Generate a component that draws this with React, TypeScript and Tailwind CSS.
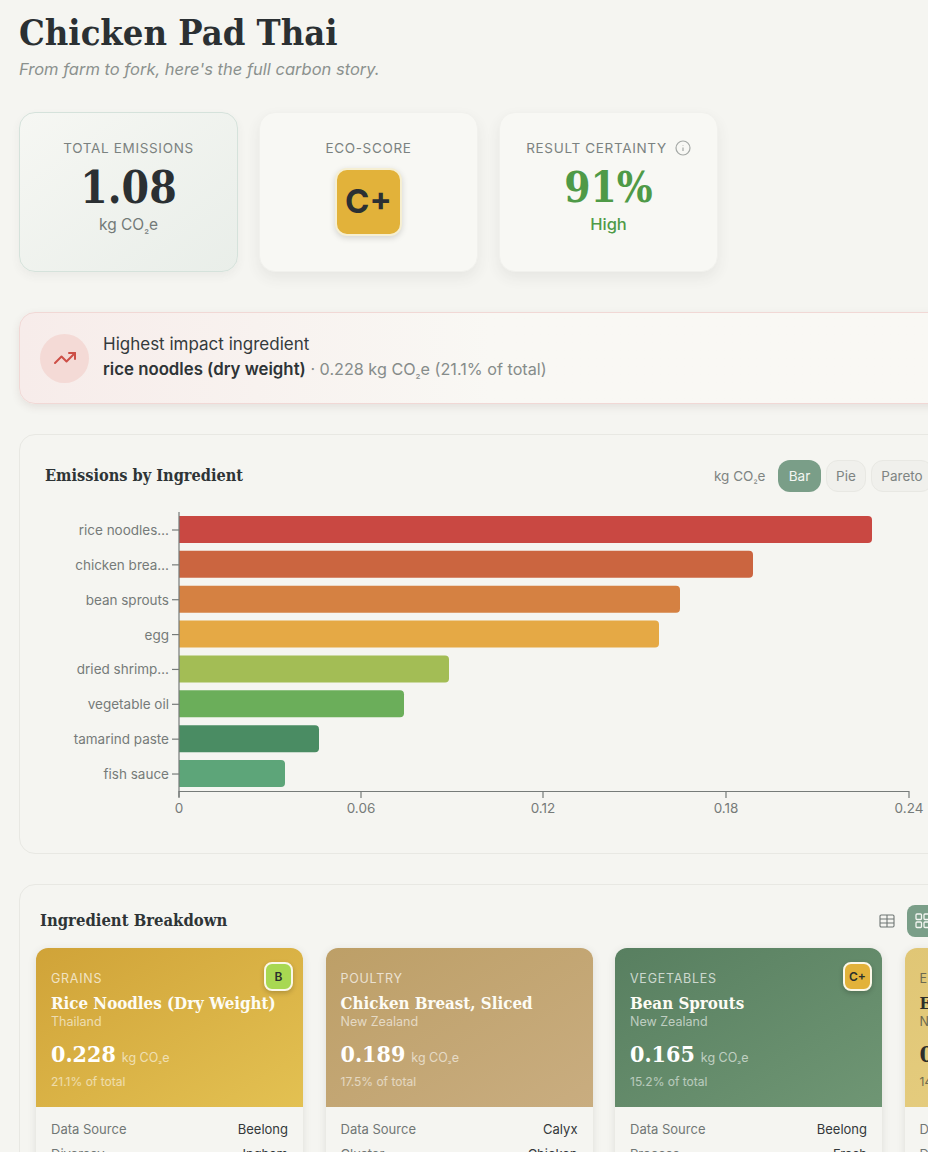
import React from "react";

const serif = "font-['DejaVu_Serif_Condensed','DejaVu_Serif','Liberation_Serif',serif]";
const bars = [
  { n: "rice noodles…", w: 694, c: "#c94842" },
  { n: "chicken brea…", w: 575, c: "#cb6540" },
  { n: "bean sprouts", w: 502, c: "#d58142" },
  { n: "egg", w: 481, c: "#e5a945" },
  { n: "dried shrimp…", w: 271, c: "#a3bd55" },
  { n: "vegetable oil", w: 226, c: "#6bae5a" },
  { n: "tamarind paste", w: 141, c: "#4a8c63" },
  { n: "fish sauce", w: 107, c: "#5da579" },
];
const ticks = [["0", 179], ["0.06", 361], ["0.12", 543], ["0.18", 726], ["0.24", 909]] as const;

function Co2() {
  return <>CO<span className="text-[0.7em] relative top-[0.15em]">₂</span>e</>;
}

function Stat({ label, children, tinted, info }: { label: string; children: React.ReactNode; tinted?: boolean; info?: boolean }) {
  return (
    <div className={`w-[219px] h-[160px] rounded-2xl flex flex-col items-center pt-[25px] ${tinted ? "border border-[#d5e2db] bg-gradient-to-br from-[#f6f7f3] to-[#e9eee9] shadow-[0_4px_10px_rgba(60,70,60,0.06)]" : "border border-[#f1f1ed] bg-[#f8f8f4] shadow-[0_6px_14px_rgba(60,70,60,0.08)]"}`}>
      <div className="flex items-center gap-2 text-[13.5px] tracking-[0.05em] text-[#7b8280] leading-[20px]">
        {label}
        {info && (
          <svg width="16" height="16" viewBox="0 0 16 16" fill="none" stroke="#a5a9a6" strokeWidth="1.2"><circle cx="8" cy="8" r="7" /><path d="M8 7.4V11M8 5v.4" /></svg>
        )}
      </div>
      {children}
    </div>
  );
}

function Grade({ g, bg }: { g: string; bg: string }) {
  return (
    <div className={`absolute right-[10px] top-[14px] w-[29px] h-[29px] rounded-lg border-2 border-[#fbf8e8] flex items-center justify-center text-[12px] font-semibold text-[#2a2f2d] shadow-[0_2px_5px_rgba(0,0,0,0.2)] ${bg}`}>{g}</div>
  );
}

function IngCard({ cat, name, origin, val, pct, grade, gradeBg, grad, dark, r1, r2l, r2r }: { cat: string; name: string; origin: string; val: string; pct: string; grade?: string; gradeBg?: string; grad: string; dark?: boolean; r1: string; r2l: string; r2r: string }) {
  return (
    <div className="relative w-[267px] shrink-0 rounded-t-xl bg-[#f5f5f1] shadow-[0_2px_8px_rgba(60,60,50,0.12)]">
      <div className={`relative h-[159px] rounded-t-xl pl-[15px] pt-[23px] ${grad}`}>
        {grade && <Grade g={grade} bg={gradeBg!} />}
        <div className={`text-[12.5px] leading-[16px] tracking-[0.06em] ${dark ? "text-[#6d6a50]" : "text-white/70"}`}>{cat}</div>
        <div className={`${serif} text-[16.8px] leading-[22px] font-bold mt-[5px] whitespace-nowrap ${dark ? "text-[#2e2f2a]" : "text-[#fdfcf5]"}`}>{name}</div>
        <div className={`text-[12.5px] leading-[14px] mt-[1px] ${dark ? "text-[#6d6a50]" : "text-white/60"}`}>{origin}</div>
        <div className="flex items-baseline gap-[6px] mt-[11px] leading-[28px]">
          <span className={`${serif} text-[23px] font-bold ${dark ? "text-[#2e2f2a]" : "text-white"}`}>{val}</span>
          <span className={`text-[12.5px] ${dark ? "text-[#6d6a50]" : "text-white/60"}`}>kg <Co2 /></span>
        </div>
        <div className={`text-[12px] leading-[16px] mt-[1px] ${dark ? "text-[#6d6a50]" : "text-white/55"}`}>{pct}</div>
      </div>
      <div className="px-[15px] pt-[13px] text-[13px] leading-[18px]">
        <div className="flex justify-between"><span className="text-[#717775]">Data Source</span><span className="text-[#33383a]">{r1}</span></div>
        <div className="flex justify-between mt-[7px]"><span className="text-[#717775]">{r2l}</span><span className="text-[#33383a]">{r2r}</span></div>
      </div>
    </div>
  );
}

export default function App() {
  return (
    <div className="w-[928px] h-[1152px] overflow-hidden bg-[#f5f5f1] font-['Inter',sans-serif] text-[#2e3436]">
      <div className="w-[960px] pl-[19px]">
        <h1 className={`${serif} pt-[9px] text-[36px] leading-[46px] font-bold text-[#2b3033]`}>Chicken Pad Thai</h1>
        <p className="mt-[2px] text-[16.5px] leading-[24px] italic text-[#8b918e]">From farm to fork, here's the full carbon story.</p>

        <div className="flex gap-[21px] mt-[31px]">
          <Stat label="TOTAL EMISSIONS" tinted>
            <div className={`${serif} text-[44px] leading-[52px] font-bold text-[#2b3033] mt-[4px]`}>1.08</div>
            <div className="text-[15.5px] leading-[22px] text-[#737a78]">kg <Co2 /></div>
          </Stat>
          <Stat label="ECO-SCORE">
            <div className="mt-[10px] w-[67px] h-[68px] rounded-xl border-2 border-[#f6efd2] bg-[#e2b23a] flex items-center justify-center text-[33px] font-bold text-[#2b3033] shadow-[0_2px_6px_rgba(0,0,0,0.15)]">C+</div>
          </Stat>
          <Stat label="RESULT CERTAINTY" info>
            <div className={`${serif} text-[42px] leading-[52px] font-bold text-[#4f9a47] mt-[4px]`}>91%</div>
            <div className="text-[16.5px] leading-[22px] font-medium text-[#4f9a47] -mt-[1px]">High</div>
          </Stat>
        </div>

        <div className="mt-[40px] h-[92px] rounded-2xl border border-[#f1d8d5] bg-gradient-to-r from-[#f7ecea] via-[#f9f8f4] to-[#f9f8f4] shadow-[0_3px_8px_rgba(80,50,50,0.1)] flex items-center pl-[20px] gap-[14px]">
          <div className="w-[49px] h-[49px] rounded-full bg-[#f4dad6] flex items-center justify-center">
            <svg width="24" height="24" viewBox="0 0 24 24" fill="none" stroke="#cd4f47" strokeWidth="2" strokeLinecap="round" strokeLinejoin="round"><path d="M22 7l-8.5 8.5-5-5L2 17" /><path d="M16 7h6v6" /></svg>
          </div>
          <div className="text-[16.2px] leading-[25px]">
            <div className="text-[17px] text-[#343a3c]">Highest impact ingredient</div>
            <div className="text-[#868c8a]"><span className="text-[16.8px] font-semibold text-[#2e3436]">rice noodles (dry weight)</span> · 0.228 kg <Co2 /> (21.1% of total)</div>
          </div>
        </div>

        <div className="mt-[30px] h-[420px] rounded-2xl border border-[#e8e8e3] bg-[#f5f5f1] relative">
          <div className="flex items-center h-[32px] mt-[25px] pl-[25px]">
            <h2 className={`${serif} w-[669px] shrink-0 text-[16.2px] font-bold text-[#2e3436]`}>Emissions by Ingredient</h2>
            <div className="text-[13.5px] text-[#7e8482] w-[64px] shrink-0">kg <Co2 /></div>
            <div className="flex gap-[5px] text-[13.5px]">
              <div className="w-[43px] h-[32px] rounded-xl bg-[#7a9e88] text-[#f4f6f2] flex items-center justify-center">Bar</div>
              <div className="w-[40px] h-[32px] rounded-xl bg-[#f0f0ec] border border-[#e8e8e3] text-[#7e8482] flex items-center justify-center">Pie</div>
              <div className="w-[62px] h-[32px] rounded-xl bg-[#f0f0ec] border border-[#e8e8e3] text-[#7e8482] flex items-center justify-center">Pareto</div>
            </div>
          </div>
          <svg className="block mt-[7px] -ml-[20px]" width="948" height="320" viewBox="0 499 948 320" fontFamily="Inter, sans-serif" fontSize="13.5" fill="#767b79">
            {bars.map((b, i) => {
              const y = 516 + i * 34.86;
              return (
                <g key={b.n}>
                  <path d={`M179 ${y}h${b.w - 5}a4 4 0 0 1 4 4v19a4 4 0 0 1-4 4h-${b.w - 5}z`} fill={b.c} />
                  <line x1="172" x2="179" y1={y + 14} y2={y + 14} stroke="#767b79" strokeWidth="1.2" />
                  <text x="169" y={y + 19} textAnchor="end">{b.n}</text>
                </g>
              );
            })}
            <path d="M179 512V797M179 791.5H909" stroke="#767b79" strokeWidth="1.2" fill="none" />
            {ticks.map(([t, x]) => (
              <g key={t}>
                <line x1={x} x2={x} y1="791" y2="798" stroke="#767b79" strokeWidth="1.2" />
                <text x={x} y="813" textAnchor="middle">{t}</text>
              </g>
            ))}
          </svg>
        </div>

        <div className="mt-[30px] h-[300px] rounded-2xl border border-[#e8e8e3] bg-[#f5f5f1] pl-[16px]">
          <div className="flex items-center h-[32px] mt-[20px] pl-[4px]">
            <h2 className={`${serif} w-[839px] shrink-0 text-[16.5px] font-bold text-[#2e3436]`}>Ingredient Breakdown</h2>
            <svg className="shrink-0" width="16" height="16" viewBox="0 0 16 16" fill="none" stroke="#6f7674" strokeWidth="1.1"><rect x="1" y="2" width="14" height="12" rx="1.2" /><path d="M1 6h14M1 10h14M8 2v12" /></svg>
            <div className="ml-[12px] w-[42px] h-[32px] shrink-0 rounded-lg bg-[#7a9e88] flex items-center pl-[8px]">
              <svg width="16" height="16" viewBox="0 0 16 16" fill="none" stroke="#f4f6f2" strokeWidth="1.3"><rect x="1" y="1" width="5.5" height="5.5" rx="1" /><rect x="9" y="1" width="5.5" height="5.5" rx="1" /><rect x="1" y="9" width="5.5" height="5.5" rx="1" /><rect x="9" y="9" width="5.5" height="5.5" rx="1" /></svg>
            </div>
          </div>
          <div className="flex gap-[22.5px] mt-[11px]">
            <IngCard cat="GRAINS" name="Rice Noodles (Dry Weight)" origin="Thailand" val="0.228" pct="21.1% of total" grade="B" gradeBg="bg-[#a8d852]" grad="bg-gradient-to-br from-[#d0a338] to-[#e3c152]" r1="Beelong" r2l="Diversey" r2r="Ingham" />
            <IngCard cat="POULTRY" name="Chicken Breast, Sliced" origin="New Zealand" val="0.189" pct="17.5% of total" grad="bg-gradient-to-br from-[#bd9f67] to-[#c9ad80]" r1="Calyx" r2l="Cluster" r2r="Chicken" />
            <IngCard cat="VEGETABLES" name="Bean Sprouts" origin="New Zealand" val="0.165" pct="15.2% of total" grade="C+" gradeBg="bg-[#e2b23a]" grad="bg-gradient-to-br from-[#587f60] to-[#6f9674]" r1="Beelong" r2l="Process" r2r="Fresh" />
            <IngCard dark cat="EGGS" name="Egg" origin="New Zealand" val="0.159" pct="14.7% of total" grad="bg-gradient-to-br from-[#e0c675] to-[#e8d084]" r1="Calyx" r2l="Dairy" r2r="Egg" />
          </div>
        </div>
      </div>
    </div>
  );
}
